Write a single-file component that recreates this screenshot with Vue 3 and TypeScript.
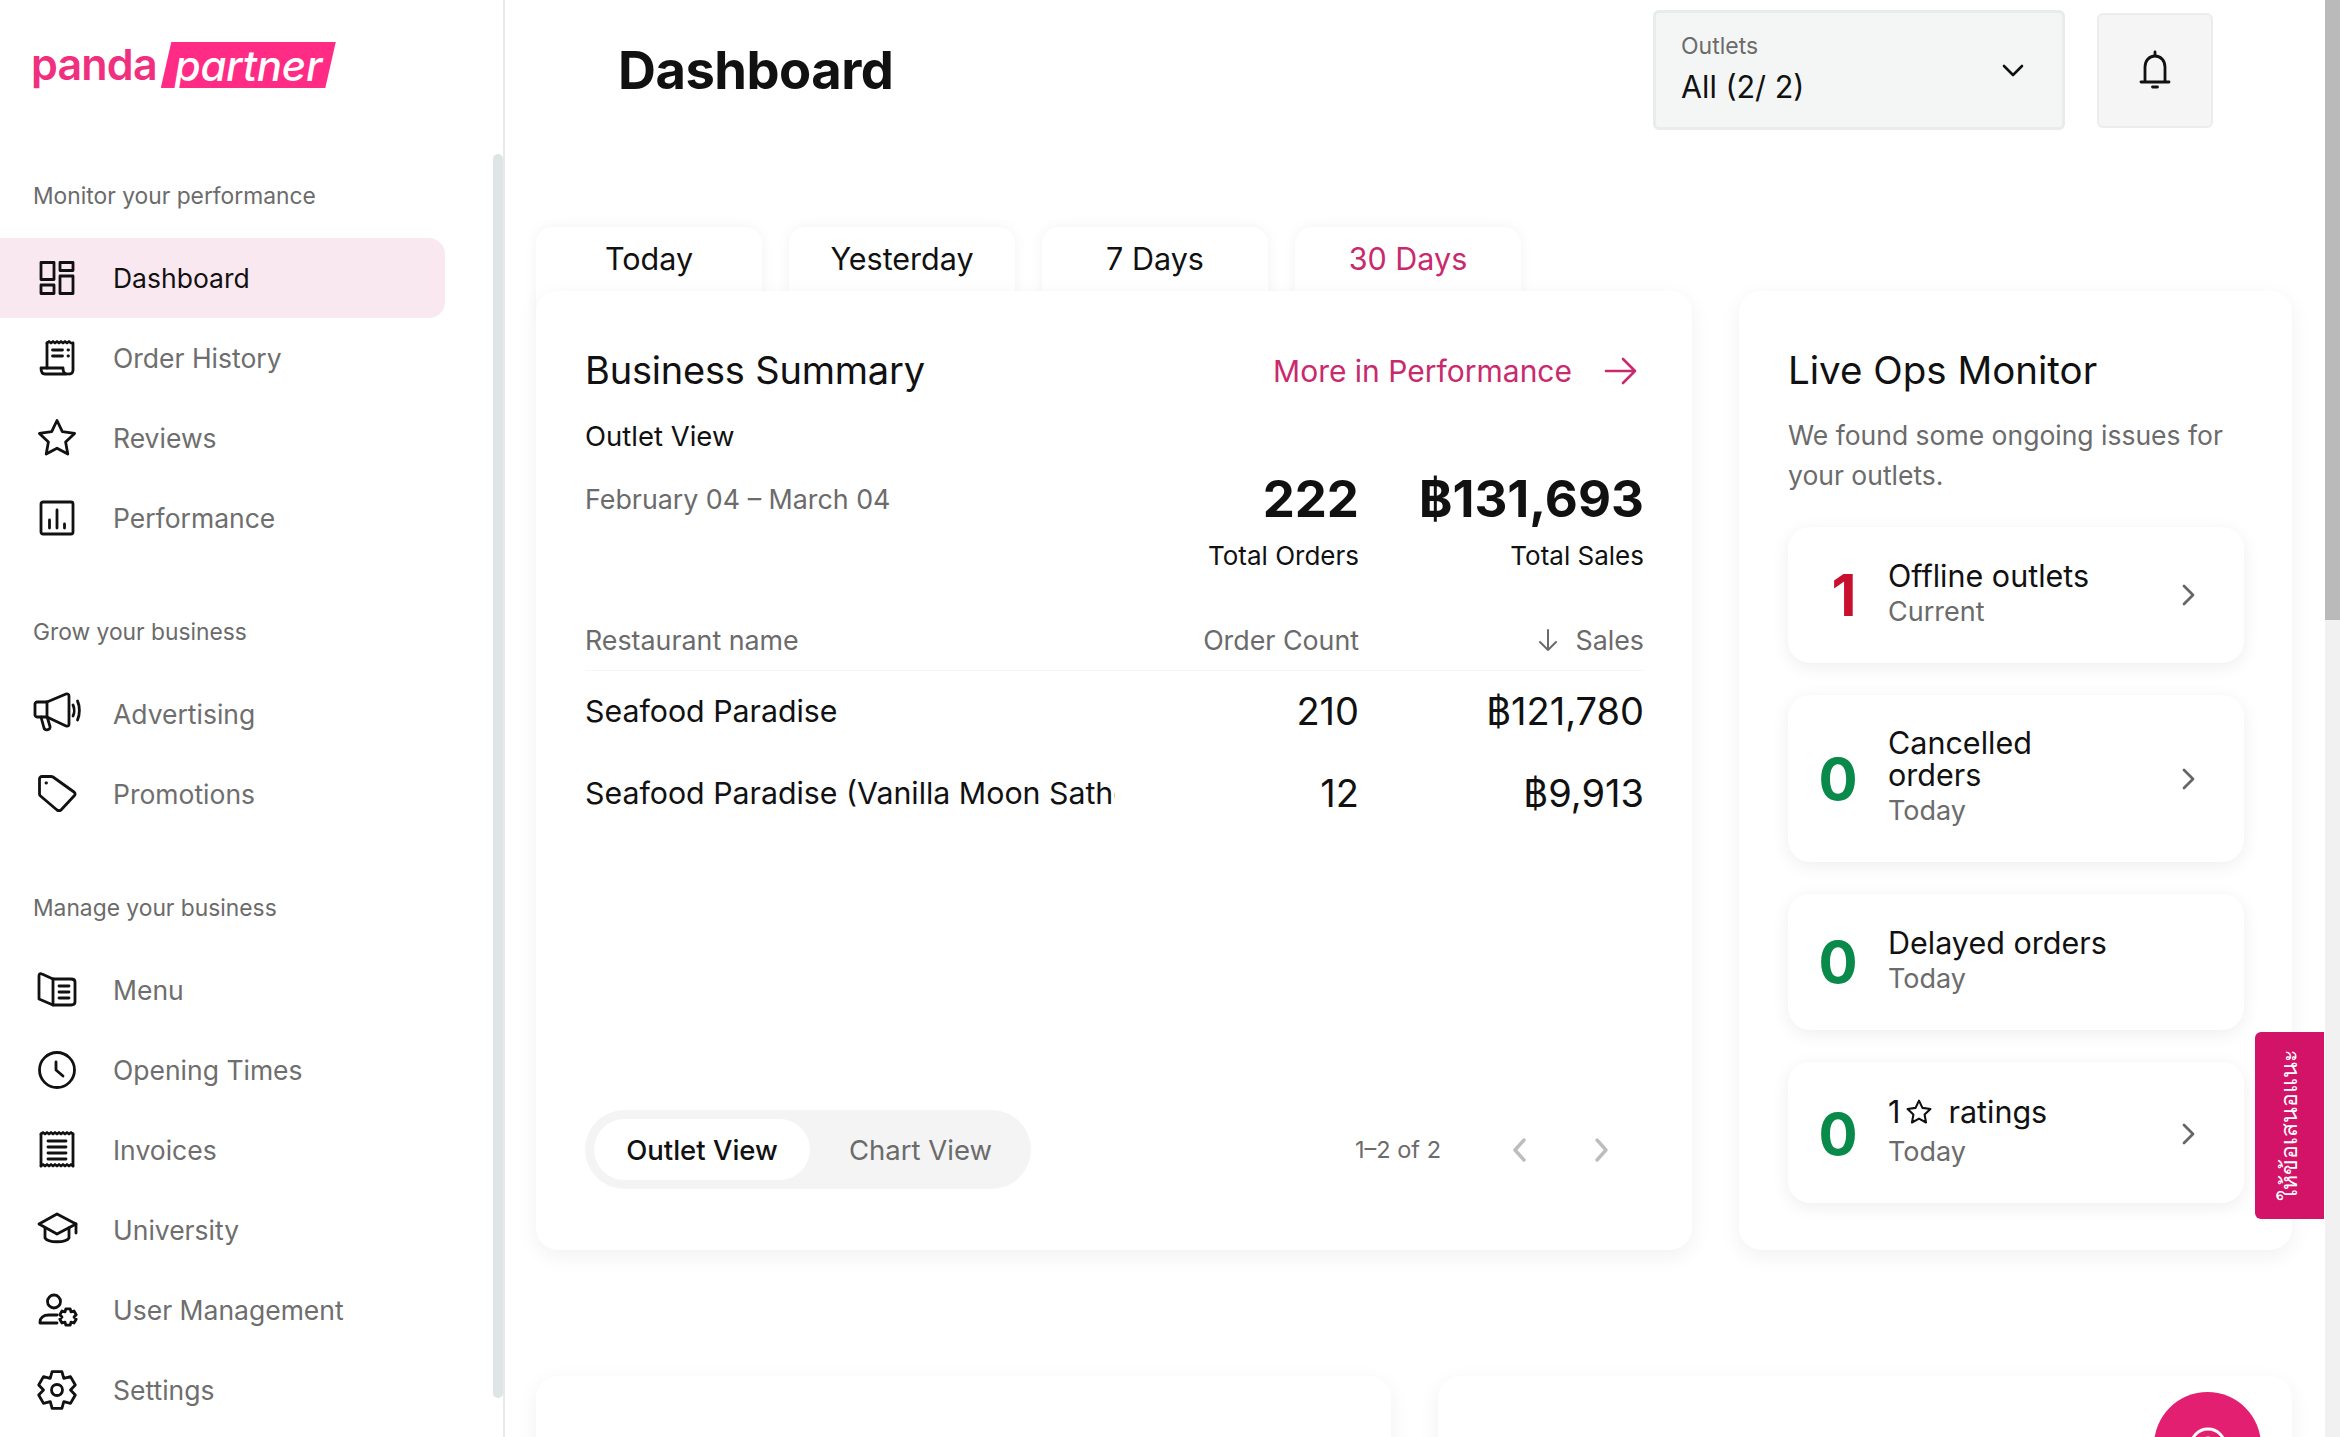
<template>
  <div class="page">
    <aside class="sidebar">
      <div class="logo">
        <span class="logo-panda">panda</span>
        <span class="logo-tag"><span>partner</span></span>
      </div>
      <section v-for="group in navGroups" :key="group.label" class="nav-group">
        <div class="nav-label">{{ group.label }}</div>
        <a
          v-for="item in group.items"
          :key="item.name"
          class="nav-item"
          :class="{ active: item.name === 'Dashboard' }"
        >
          <svg class="nav-icon" viewBox="0 0 40 40" fill="none" stroke="#111" stroke-width="2.8" stroke-linecap="round" stroke-linejoin="round">
            <path v-for="d in item.paths" :key="d" :d="d" />
          </svg>
          <span>{{ item.name }}</span>
        </a>
      </section>
      <div class="side-thumb"></div>
    </aside>

    <main class="main">
      <header class="top">
        <h1>Dashboard</h1>
        <div class="outlet-select">
          <div>
            <div class="outlet-label">Outlets</div>
            <div class="outlet-value">All (2/ 2)</div>
          </div>
          <svg width="24" height="24" viewBox="0 0 24 24" fill="none" stroke="#111" stroke-width="2.6" stroke-linecap="round" stroke-linejoin="round">
            <path d="M3 8l9 9 9-9" />
          </svg>
        </div>
        <button class="bell">
          <svg width="36" height="42" viewBox="0 0 36 42" fill="none" stroke="#111" stroke-width="2.8" stroke-linecap="round" stroke-linejoin="round">
            <path d="M8 32V18c0-6 4-11 10-11s10 5 10 11v14" />
            <path d="M4 33h28" />
            <path d="M18 3v3" />
            <path d="M15.500 38h5" />
          </svg>
        </button>
      </header>

      <nav class="tabs">
        <div v-for="tab in tabs" :key="tab" class="tab" :class="{ active: tab === '30 Days' }">{{ tab }}</div>
      </nav>

      <div class="row-one">
        <section class="card summary">
          <div class="summary-head">
            <h2>Business Summary</h2>
            <a class="more">
              More in Performance
              <svg width="34" height="30" viewBox="0 0 34 30" fill="none" stroke="#c92a6d" stroke-width="2.6" stroke-linecap="round" stroke-linejoin="round">
                <path d="M2 15h29M19 3l12 12-12 12" />
              </svg>
            </a>
          </div>
          <div class="view-name">Outlet View</div>

          <div class="grid stats">
            <div class="dates">February 04 – March 04</div>
            <div>
              <div class="stat-value">222</div>
              <div class="stat-label">Total Orders</div>
            </div>
            <div>
              <div class="stat-value">฿131,693</div>
              <div class="stat-label">Total Sales</div>
            </div>
          </div>

          <div class="grid table-head">
            <div>Restaurant name</div>
            <div>Order Count</div>
            <div class="sales-head">
              <svg width="24" height="24" viewBox="0 0 24 24" fill="none" stroke="#6b6b6b" stroke-width="2" stroke-linecap="round" stroke-linejoin="round">
                <path d="M12 2v20M4 14l8 8 8-8" />
              </svg>
              <span>Sales</span>
            </div>
          </div>
          <div v-for="row in rows" :key="row.name" class="grid table-row">
            <div class="row-name">{{ row.name }}</div>
            <div>{{ row.orders }}</div>
            <div>{{ row.sales }}</div>
          </div>

          <div class="summary-foot">
            <div class="toggle">
              <span class="toggle-on">Outlet View</span>
              <span class="toggle-off">Chart View</span>
            </div>
            <div class="pager">
              <span>1–2 of 2</span>
              <svg class="pager-prev" width="40" height="30" viewBox="0 0 40 30" fill="none" stroke="#bdbdbd" stroke-width="3.4" stroke-linecap="round" stroke-linejoin="round">
                <path d="M24 5L15 15l9 10" />
              </svg>
              <svg class="pager-next" width="40" height="30" viewBox="0 0 40 30" fill="none" stroke="#bdbdbd" stroke-width="3.4" stroke-linecap="round" stroke-linejoin="round">
                <path d="M16 5l9 10-9 10" />
              </svg>
            </div>
          </div>
        </section>

        <section class="card live">
          <h2>Live Ops Monitor</h2>
          <p>We found some ongoing issues for your outlets.</p>
          <div class="live-list">
            <div v-for="issue in issues" :key="issue.title" class="issue" :class="{ starred: issue.star }">
              <div class="issue-count" :class="{ bad: issue.count > 0 }">{{ issue.count }}</div>
              <div class="issue-text">
                <div class="issue-title">
                  <template v-if="issue.star">
                    1
                    <svg class="issue-star" width="26" height="26" viewBox="0 0 40 40" fill="none" stroke="#111" stroke-width="3.2" stroke-linejoin="round">
                      <path :d="STAR" />
                    </svg>
                  </template>
                  {{ issue.title }}
                </div>
                <div class="issue-sub">{{ issue.sub }}</div>
              </div>
              <svg v-if="issue.arrow" class="issue-arrow" width="24" height="28" viewBox="0 0 24 28" fill="none" stroke="#666" stroke-width="2.800" stroke-linecap="round" stroke-linejoin="round">
                <path d="M8 5l9 9-9 9" />
              </svg>
            </div>
          </div>
        </section>
      </div>

      <div class="row-two">
        <section class="card lower"></section>
        <section class="card lower"></section>
      </div>
    </main>

    <div class="page-scroll"><div class="page-thumb"></div></div>

    <div class="feedback"><span>ให้ข้อเสนอแนะ</span></div>
    <div class="fab">
      <svg width="44" height="44" viewBox="0 0 44 44" fill="none" stroke="#fff" stroke-width="3">
        <circle cx="22" cy="22" r="17" />
        <circle cx="22" cy="22" r="8" />
      </svg>
    </div>
  </div>
</template>

<script setup lang="ts">
interface NavItem {
  name: string;
  paths: string[];
}

interface Issue {
  count: number;
  title: string;
  sub: string;
  arrow: boolean;
  star?: boolean;
}

const STAR = "M20 2.500l5.300 11.200 12.300 1.700-9 8.500 2.200 12.200L20 30.200 9.200 36.100l2.200-12.200-9-8.500 12.300-1.700z";

// six bump cog, same shape for the settings icon and the small one beside the user
const cog = (cx: number, cy: number, outer: number, inner: number): string => {
  const pts: string[] = [];
  for (let i = 0; i < 6; i++) {
    const a = (Math.PI / 3) * i - Math.PI / 2;
    for (const [off, r] of [[-0.26, outer], [0.26, outer], [Math.PI / 6, inner]] as const) {
      pts.push(`${(cx + Math.cos(a + off) * r).toFixed(1)} ${(cy + Math.sin(a + off) * r).toFixed(1)}`);
    }
  }
  return `M${pts.join("L")}z`;
};

// serrated paper edge of the receipt icons
const teeth = (x0: number, x1: number, y: number): string => {
  let d = `M${x0} ${y}`;
  for (let x = x0 + 2; x < x1; x += 4) d += `L${x} ${y - 1.5}L${x + 2} ${y}`;
  return d;
};

const navGroups: { label: string; items: NavItem[] }[] = [
  {
    label: "Monitor your performance",
    items: [
      { name: "Dashboard", paths: ["M4 4.500h13v17H4z", "M23 4.500h13v8H23z", "M4 27h13v8.500H4z", "M23 18h13v17.500H23z"] },
      {
        name: "Order History",
        paths: [
          teeth(10, 36, 5),
          "M10 5v25",
          "M36 5v27c0 2.500-1.500 4-4 4",
          "M4 30h22c0 3 1 6 4 6H8c-3 0-4-3-4-6z",
          "M15.500 12h10M15.500 18h10M31 12h.5M31 18h.5",
        ],
      },
      { name: "Reviews", paths: [STAR] },
      {
        name: "Performance",
        paths: ["M6 4h28a2 2 0 0 1 2 2v28a2 2 0 0 1-2 2H6a2 2 0 0 1-2-2V6a2 2 0 0 1 2-2z", "M12.500 22v8M20 12v18M27.500 26v4"],
      },
    ],
  },
  {
    label: "Grow your business",
    items: [
      {
        name: "Advertising",
        paths: [
          "M0 8h10L29 0c2-.5 3 .5 3 2v28c0 2-1 2.500-3 2L10 23H0c-1 0-2-1-2-2V10c0-1 1-2 2-2z",
          "M10 8v15",
          "M4 23l3 11c1 3 7 2 6-1.500L10.500 24",
          "M36 11c1.500 3 1.500 8 0 11",
          "M40.500 7c2.500 5 2.500 14 0 19",
        ],
      },
      {
        name: "Promotions",
        paths: [
          "M2.500 5c0-1.500 1-2.500 2.500-2.500h9c1 0 1.500.2 2 .5l21 15c1.500 1 1.500 3 0 4L24 36c-1.500 1-2.500 1-4 0L3.500 22c-.7-.6-1-1-1-2z",
          "M9 9h.5",
        ],
      },
    ],
  },
  {
    label: "Manage your business",
    items: [
      {
        name: "Menu",
        paths: ["M16 9L5 4c-2-1-3 0-3 2v23l14 6h18c2 0 4-1 4-3V12c0-2-2-3-4-3z", "M16 9v26", "M22 16h10M22 22h10M22 28h10"],
      },
      { name: "Opening Times", paths: ["M20 2.500a17.500 17.500 0 1 0 0 35 17.500 17.500 0 0 0 0-35z", "M19 12v8l7 6"] },
      {
        name: "Invoices",
        paths: [teeth(4, 36, 4), teeth(4, 36, 36), "M4 4v32M36 4v32", "M11 11h18M11 17h18M11 23h18M11 29h18"],
      },
      {
        name: "University",
        paths: ["M2 14L20 4l19 10-19 10z", "M8 18v10c3 5 21 5 24 0V18", "M39 14v9"],
      },
      {
        name: "User Management",
        paths: [
          "M17 5a6.500 6.500 0 1 0 0 13 6.500 6.500 0 0 0 0-13z",
          "M20 25h-8c-6 0-9 3-9 7v1h17",
          cog(31, 27, 8.500, 6),
        ],
      },
      { name: "Settings", paths: [cog(20, 20, 19, 13.500), "M20 14.500a5.500 5.500 0 1 0 0 11 5.500 5.500 0 0 0 0-11z"] },
    ],
  },
];

const tabs = ["Today", "Yesterday", "7 Days", "30 Days"];

const rows = [
  { name: "Seafood Paradise", orders: "210", sales: "฿121,780" },
  { name: "Seafood Paradise (Vanilla Moon Sathorn)", orders: "12", sales: "฿9,913" },
];

const issues: Issue[] = [
  { count: 1, title: "Offline outlets", sub: "Current", arrow: true },
  { count: 0, title: "Cancelled orders", sub: "Today", arrow: true },
  { count: 0, title: "Delayed orders", sub: "Today", arrow: false },
  { count: 0, title: "ratings", sub: "Today", arrow: true, star: true },
];
</script>

<style scoped>
.page {
  position: relative;
  display: flex;
  width: 2340px;
  height: 1437px;
  overflow: hidden;
  background: #fff;
  color: #111;
  font-family: Inter, "Noto Sans", "Liberation Sans", sans-serif;
}

.sidebar {
  position: relative;
  flex: 0 0 505px;
  box-sizing: border-box;
  border-right: 2px solid #e9e9e9;
}

.logo {
  display: flex;
  align-items: center;
  gap: 4px;
  box-sizing: border-box;
  height: 179px;
  padding-bottom: 49px;
  padding-left: 31px;
}

.logo-panda {
  margin-top: -3px;
  color: #f0307f;
  font-size: 43px;
  font-weight: 600;
  letter-spacing: -0.8px;
  line-height: 44px;
}

.logo-tag {
  display: flex;
  align-items: center;
  justify-content: center;
  width: 175px;
  height: 46px;
  background: #ff2b85;
  clip-path: polygon(6% 0, 100% 0, 94% 100%, 0 100%);
}

.logo-tag span {
  color: #fff;
  font-size: 42px;
  font-style: italic;
  font-weight: 500;
  letter-spacing: -0.3px;
}

.nav-group + .nav-group {
  margin-top: 57px;
}

.nav-label {
  height: 34px;
  margin-bottom: 25px;
  padding-left: 33px;
  color: #6b6b6b;
  font-size: 22.800px;
  line-height: 34px;
}

.nav-item {
  display: flex;
  align-items: center;
  box-sizing: border-box;
  width: 445px;
  height: 80px;
  padding-left: 37px;
  color: #6e6e6e;
  font-size: 26.500px;
}

.nav-item.active {
  background: #fae8f0;
  border-radius: 0 16px 16px 0;
  color: #111;
}

.nav-icon {
  flex: none;
  overflow: visible;
  width: 40px;
  height: 40px;
  margin-right: 36px;
}

.side-thumb {
  position: absolute;
  top: 154px;
  right: 0;
  width: 10px;
  height: 1244px;
  background: #dde5e6;
  border-radius: 5px;
}

.main {
  flex: 1;
  min-width: 0;
  padding: 0 33px 0 31px;
}

.top {
  display: flex;
  align-items: center;
  box-sizing: border-box;
  height: 227px;
  padding: 10px 79px 97px 82px;
}

h1 {
  flex: 1;
  margin: 0;
  font-size: 52.500px;
  font-weight: 700;
  letter-spacing: -0.5px;
}

.outlet-select {
  display: flex;
  align-items: center;
  justify-content: space-between;
  box-sizing: border-box;
  width: 412px;
  height: 120px;
  padding: 0 37px 0 25px;
  background: #f4f6f6;
  border: 3px solid #e9ecec;
  border-radius: 6px;
}

.outlet-label {
  margin-top: -2px;
  color: #6b6b6b;
  font-size: 23px;
  line-height: 30px;
}

.outlet-value {
  margin-top: 6px;
  font-size: 30.500px;
  line-height: 40px;
}

.bell {
  display: flex;
  align-items: center;
  justify-content: center;
  width: 116px;
  height: 115px;
  margin-left: 32px;
  padding: 0;
  background: #f5f5f5;
  border: 2px solid #ececec;
  border-radius: 6px;
}

.tabs {
  display: flex;
  gap: 27px;
  height: 64px;
}

.tab {
  width: 226px;
  height: 90px;
  background: #fff;
  border-radius: 16px 16px 0 0;
  box-shadow: 0 0 14px rgba(0, 0, 0, 0.05);
  font-size: 30.500px;
  line-height: 64px;
  text-align: center;
}

.tab.active {
  color: #c92a6d;
}

.card {
  position: relative;
  box-sizing: border-box;
  background: #fff;
  border-radius: 22px;
  box-shadow: 0 6px 22px rgba(0, 0, 0, 0.06);
}

.row-one {
  display: grid;
  grid-template-columns: 1156px 553px;
  gap: 47px;
}

.row-two {
  display: grid;
  grid-template-columns: 855px 854px;
  gap: 47px;
  margin-top: 126px;
}

.lower {
  height: 300px;
}

.summary {
  display: flex;
  flex-direction: column;
  height: 959px;
  padding: 56px 48px 61px 49px;
}

h2 {
  margin: 0;
  font-size: 38px;
  font-weight: 400;
  letter-spacing: -0.2px;
  line-height: 46px;
}

.live h2 {
  font-size: 38.500px;
  letter-spacing: 0;
}

.summary-head {
  display: flex;
  align-items: center;
  justify-content: space-between;
}

.more {
  display: flex;
  align-items: center;
  gap: 32px;
  margin-top: 2px;
  margin-right: 6px;
  color: #c92a6d;
  font-size: 30px;
}

.view-name {
  margin-top: 23px;
  font-size: 27.500px;
  line-height: 40px;
}

.grid {
  display: grid;
  grid-template-columns: 530px 244px 285px;
  text-align: right;
}

.grid > :first-child {
  text-align: left;
}

.stats {
  margin-top: 11px;
}

.dates {
  padding-top: 12px;
  color: #6b6b6b;
  font-size: 26.800px;
  line-height: 40px;
}

.stat-value {
  font-size: 51px;
  font-weight: 700;
  line-height: 64px;
}

.stat-label {
  margin-top: 7px;
  font-size: 26px;
  line-height: 36px;
}

.table-head {
  margin-top: 48px;
  padding-bottom: 12px;
  border-bottom: 1px solid #f6f6f6;
  color: #6b6b6b;
  font-size: 26.800px;
  line-height: 36px;
}

.sales-head {
  display: flex;
  align-items: center;
  justify-content: flex-end;
  gap: 16px;
}

.table-row {
  align-items: center;
  height: 82px;
  margin-top: -1px;
  margin-bottom: 1px;
  font-size: 38px;
  font-weight: 400;
}

.row-name {
  overflow: hidden;
  font-size: 30.300px;
  white-space: nowrap;
}

.summary-foot {
  display: flex;
  align-items: center;
  justify-content: space-between;
  margin-top: auto;
  padding-right: 23px;
}

.toggle {
  display: flex;
  align-items: center;
  box-sizing: border-box;
  width: 446px;
  height: 79px;
  padding: 0 9px;
  background: #f4f4f4;
  border-radius: 40px;
  font-size: 27.500px;
}

.toggle-on {
  display: flex;
  align-items: center;
  justify-content: center;
  width: 216px;
  height: 61px;
  background: #fff;
  border-radius: 31px;
  font-weight: 500;
}

.toggle-off {
  margin-left: 39px;
  color: #6b6b6b;
}

.pager {
  display: flex;
  align-items: center;
  color: #6b6b6b;
  font-size: 23.500px;
}

.pager-prev {
  margin-left: 59px;
}

.pager-next {
  margin-left: 41px;
}

.live {
  padding: 56px 48px 0 49px;
}

.live p {
  margin: 22px 0 0;
  color: #6b6b6b;
  font-size: 26.500px;
  line-height: 40px;
}

.live-list {
  display: flex;
  flex-direction: column;
  gap: 32px;
  margin-top: 32px;
}

.issue {
  display: flex;
  align-items: center;
  box-sizing: border-box;
  min-height: 136px;
  padding: 33px 0 33px 14px;
  background: #fff;
  border-radius: 22px;
  box-shadow: 0 4px 18px rgba(0, 0, 0, 0.07);
}

.issue-count {
  flex: none;
  width: 72px;
  margin-right: 14px;
  color: #0a8a4a;
  font-size: 58px;
  font-weight: 700;
  text-align: center;
}

.issue-count.bad {
  padding-left: 6px;
  margin-right: 8px;
  color: #c8102e;
}

.issue-text {
  flex: 1;
  min-width: 0;
}

.issue-title {
  display: flex;
  align-items: center;
  max-width: 225px;
  margin-top: -1px;
  font-size: 30.500px;
  line-height: 32px;
}

.issue-star {
  margin: 0 16px 0 6px;
}

.issue-sub {
  margin-top: 1px;
  color: #6b6b6b;
  font-size: 27px;
  line-height: 37px;
}

.starred {
  min-height: 138px;
  padding-top: 35px;
}

.starred .issue-sub {
  margin-top: 5px;
}

.issue-arrow {
  margin-right: 44px;
}

.page-scroll {
  flex: 0 0 15px;
  background: #f1f1f1;
}

.page-thumb {
  height: 620px;
  background: #bababa;
}

.feedback {
  position: absolute;
  top: 1032px;
  left: 2255px;
  display: flex;
  align-items: center;
  justify-content: center;
  width: 69px;
  height: 187px;
  padding-right: 4px;
  box-sizing: border-box;
  background: #d31367;
  border-radius: 6px 0 0 6px;
}

.feedback span {
  color: #fff;
  font-family: "Noto Sans", "DejaVu Sans", sans-serif;
  font-size: 23px;
  font-weight: 500;
  transform: rotate(180deg);
  white-space: nowrap;
  writing-mode: vertical-rl;
}

.fab {
  position: absolute;
  top: 1392px;
  left: 2154px;
  display: flex;
  align-items: center;
  justify-content: center;
  width: 107px;
  height: 107px;
  background: #e21f71;
  border-radius: 50%;
}
</style>
